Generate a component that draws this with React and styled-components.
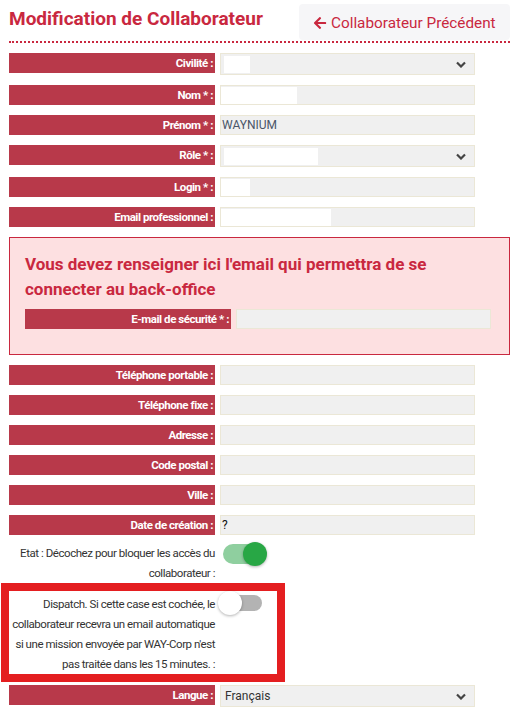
import React from "react";
import styled, { createGlobalStyle } from "styled-components";
import { FaArrowLeft } from "react-icons/fa";

const GlobalStyle = createGlobalStyle`
  body {
    margin: 0;
    background: #fff;
    font-family: "Roboto", "Liberation Sans", sans-serif;
  }
`;

const Page = styled.div`
  width: 513px;
  padding: 4px 3px 0 9px;
  box-sizing: border-box;
`;

const Header = styled.div`
  display: flex;
  justify-content: space-between;
  align-items: center;
  border-bottom: 2px dotted #c9283f;
  padding-bottom: 1px;
  margin-bottom: 10px;
`;

const Title = styled.h1`
  margin: 0;
  align-self: flex-start;
  padding-top: 3px;
  color: #c9283f;
  font-size: 19px;
  font-weight: 700;
`;

const BackButton = styled.button`
  display: flex;
  align-items: center;
  gap: 4px;
  height: 36px;
  width: 211px;
  padding: 2px 0 0 14px;
  border: none;
  border-radius: 4px;
  background: #f6f6f8;
  color: #c9283f;
  font-family: inherit;
  font-size: 15.3px;
`;

const Row = styled.div`
  display: grid;
  grid-template-columns: 206px 255px;
  column-gap: 5px;
  align-items: start;
  margin-bottom: ${(p) => p.$mb ?? 10}px;
`;

const Label = styled.div`
  height: 20px;
  line-height: 20px;
  background: #b8394a;
  color: #fff;
  font-size: 11.5px;
  letter-spacing: -0.45px;
  font-weight: 700;
  text-align: right;
  padding-right: 2px;
  box-sizing: border-box;
  white-space: nowrap;
`;

const Input = styled.div`
  height: 20px;
  box-sizing: border-box;
  background: #f0f0f0;
  border: 1px solid #ebe7d6;
  display: flex;
  align-items: center;
  font-size: 12px;
  color: ${(p) => p.$color || "#333"};
  padding-left: ${(p) => p.$pad ?? 0}px;
`;

const Select = styled(Input)`
  height: 22px;
  justify-content: space-between;
  padding-right: 8px;
`;

const Redacted = styled.span`
  display: block;
  height: ${(p) => p.$h || 17}px;
  width: ${(p) => p.$w}px;
  margin-left: ${(p) => p.$ml || 0}px;
  background: #fff;
`;

const Chevron = () => (
  <svg width="10" height="7" viewBox="0 0 10 7">
    <path d="M1 1.5 L5 5.5 L9 1.5" stroke="#444" strokeWidth="2.2" fill="none" />
  </svg>
);

const Notice = styled.div`
  border: 1px solid #c9283f;
  background: #fde0e1;
  padding: 14px 15px 25px 15px;
  margin-bottom: 10px;
`;

const NoticeText = styled.h3`
  margin: 0 0 7px 0;
  color: #c9283f;
  font-size: 17px;
  font-weight: 700;
  line-height: 25px;
`;

const ToggleRow = styled.div`
  display: grid;
  grid-template-columns: 206px auto;
  column-gap: ${(p) => p.$gap ?? 8}px;
  align-items: start;
`;

const ToggleLabel = styled.div`
  color: #333;
  font-size: 11.5px;
  letter-spacing: -0.45px;
  line-height: 20px;
  text-align: right;
  white-space: nowrap;
`;

const Track = styled.div`
  width: 42px;
  height: ${(p) => (p.$on ? 20 : 16)}px;
  margin-top: 1px;
  border-radius: 10px;
  background: ${(p) => (p.$on ? "#8fcf9f" : "#b3b3b3")};
  display: flex;
  align-items: center;
  justify-content: ${(p) => (p.$on ? "flex-end" : "flex-start")};
`;

const Knob = styled.div`
  width: 24px;
  height: 24px;
  flex: none;
  border-radius: 50%;
  background: ${(p) => (p.$on ? "#28a745" : "#fff")};
  box-shadow: 0 1px 3px rgba(0, 0, 0, 0.3);
  margin: ${(p) => (p.$on ? "0 -2px 0 0" : "0 0 0 -2px")};
`;

const Highlight = styled.div`
  border: 8px solid #e41e20;
  margin: 0 0 3px -8px;
  width: 268px;
  padding-top: 3px;
  background: #fff;
`;

const Toggle = ({ on }) => (
  <Track $on={on}>
    <Knob $on={on} />
  </Track>
);

export default function App() {
  return (
    <Page>
      <GlobalStyle />
      <Header>
        <Title>Modification de Collaborateur</Title>
        <BackButton>
          <FaArrowLeft size={14} />
          Collaborateur Précédent
        </BackButton>
      </Header>

      <Row $mb={10}>
        <Label>Civilité :</Label>
        <Select>
          <Redacted $w={26} $ml={3} />
          <Chevron />
        </Select>
      </Row>
      <Row>
        <Label>Nom * :</Label>
        <Input>
          <Redacted $w={76} />
        </Input>
      </Row>
      <Row>
        <Label>Prénom * :</Label>
        <Input $color="#4a5568" $pad={1}>WAYNIUM</Input>
      </Row>
      <Row>
        <Label>Rôle * :</Label>
        <Select>
          <Redacted $w={94} $ml={3} />
          <Chevron />
        </Select>
      </Row>
      <Row>
        <Label>Login * :</Label>
        <Input>
          <Redacted $w={29} />
        </Input>
      </Row>
      <Row>
        <Label>Email professionnel :</Label>
        <Input>
          <Redacted $w={110} />
        </Input>
      </Row>

      <Notice>
        <NoticeText>
          Vous devez renseigner ici l'email qui permettra de se connecter au back-office
        </NoticeText>
        <Row $mb={0}>
          <Label>E-mail de sécurité * :</Label>
          <Input />
        </Row>
      </Notice>

      {["Téléphone portable :", "Téléphone fixe :", "Adresse :", "Code postal :", "Ville :"].map((l) => (
        <Row key={l}>
          <Label>{l}</Label>
          <Input />
        </Row>
      ))}
      <Row $mb={8}>
        <Label>Date de création :</Label>
        <Input $color="#111" $pad={1}>?</Input>
      </Row>

      <ToggleRow>
        <ToggleLabel>
          Etat : Décochez pour bloquer les accès du
          <br />
          collaborateur :
        </ToggleLabel>
        <Toggle on />
      </ToggleRow>

      <Highlight>
        <ToggleRow $gap={5}>
          <ToggleLabel>
            Dispatch. Si cette case est cochée, le
            <br />
            collaborateur recevra un email automatique
            <br />
            si une mission envoyée par WAY-Corp n'est
            <br />
            pas traitée dans les 15 minutes. :
          </ToggleLabel>
          <Toggle />
        </ToggleRow>
      </Highlight>

      <Row>
        <Label>Langue :</Label>
        <Select $pad={4}>
          Français
          <Chevron />
        </Select>
      </Row>
    </Page>
  );
}
